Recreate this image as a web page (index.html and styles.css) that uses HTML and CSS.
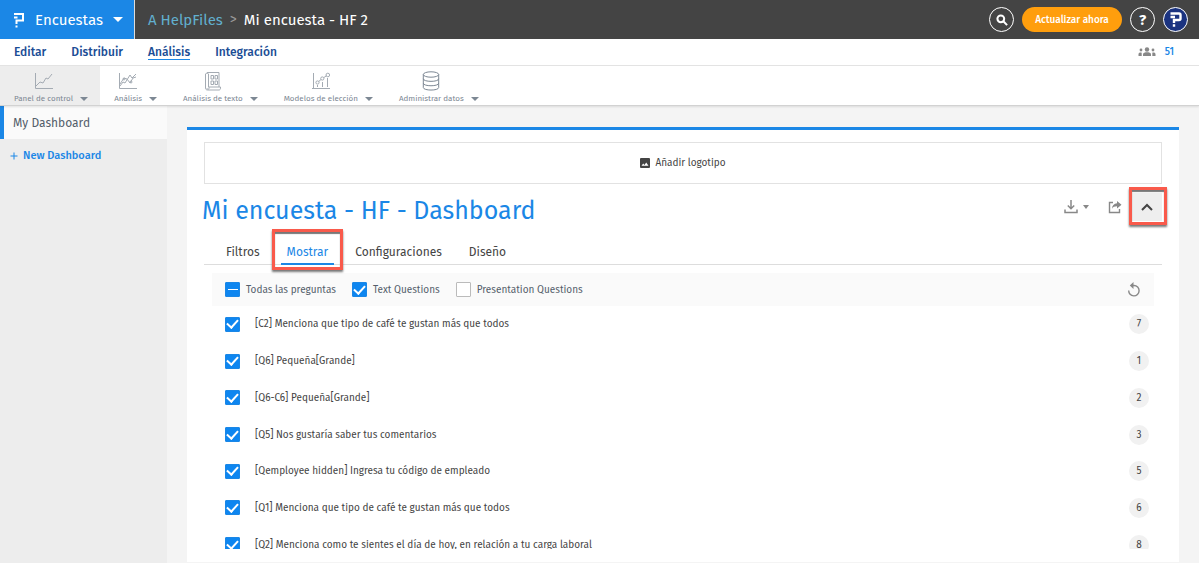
FILE: index.html
```html
<!DOCTYPE html>
<html lang="es">
<head>
    <meta charset="UTF-8">
    <meta name="viewport" content="width=device-width, initial-scale=1.0">
    <title>Mi encuesta - HF - Dashboard</title>
    <link rel="stylesheet" href="styles.css">
</head>
<body>
    <header class="header">
        <button class="product">
            <svg width="12" height="16" viewBox="0 0 12 16" fill="none" stroke="currentColor" stroke-width="2"><path d="M1 2h9v6.500H3.500v3.500M1 5.500h3.500M2.500 14.500h2"/></svg>
            <span>Encuestas</span>
            <i class="caret"></i>
        </button>
        <nav class="breadcrumb">
            <a href="#">A HelpFiles</a>
            <span class="sep">&gt;</span>
            <span>Mi encuesta - HF 2</span>
        </nav>
        <div class="header-actions">
            <button class="round" aria-label="Buscar">
                <svg width="12" height="12" viewBox="0 0 12 12" fill="none" stroke="currentColor" stroke-width="2"><circle cx="4.800" cy="4.800" r="3.400"/><path d="M7.300 7.300l3.800 3.800"/></svg>
            </button>
            <button class="upgrade">Actualizar ahora</button>
            <button class="round help">?</button>
            <button class="round account" aria-label="Cuenta">
                <svg width="14" height="17" viewBox="0 0 14 17" fill="none" stroke="currentColor" stroke-width="2.400"><path d="M1.500 2.500H10a1.500 1.500 0 0 1 1.500 1.500v3.500A1.500 1.500 0 0 1 10 9H5v3M1.500 6H6M3.800 14.500h2.400"/></svg>
            </button>
        </div>
    </header>

    <nav class="menu">
        <a href="#">Editar</a>
        <a href="#">Distribuir</a>
        <a href="#" class="active">Análisis</a>
        <a href="#">Integración</a>
        <a href="#" class="users">
            <svg width="18" height="10" viewBox="0 0 18 10" fill="#888"><circle cx="9" cy="2.500" r="2.200"/><circle cx="3" cy="3" r="1.400"/><circle cx="15" cy="3" r="1.400"/><path d="M5 9V7.400C5 5.800 7 5.300 9 5.300s4 .5 4 2.100V9zM.5 9V7c0-1.200 1-1.700 2.500-1.600.6 0 .7.300.7 1V9zM17.500 9V7c0-1.200-1-1.700-2.500-1.600-.6 0-.7.300-.7 1V9z"/></svg>
            <span>51</span>
        </a>
    </nav>

    <div class="toolbar">
        <button class="tool selected">
            <svg width="20" height="18" viewBox="0 0 20 18"><path d="M1.500 1v15.500H19M2 14l4-4 3 1 3-5 2 1 4-5"/></svg>
            <span>Panel de control</span><i class="caret"></i>
        </button>
        <button class="tool">
            <svg width="20" height="18" viewBox="0 0 20 18"><path d="M1.500 1v15.500H19M2 14l3-4 2 1 5-8 2 3 4-4M2 12l4-6 3 1 3 4 3-5 3-1"/><circle cx="6" cy="7" r="1"/><circle cx="13" cy="10" r="1"/></svg>
            <span>Análisis</span><i class="caret"></i>
        </button>
        <button class="tool">
            <svg width="18" height="20" viewBox="0 0 18 20"><path d="M4.500 16V3A1.700 1.700 0 0 0 1.500 3v14c0 1.300.8 2 2 2H15c1 0 1.500-.8 1.500-2v-1H5v1c0 2-2 2-2 0M3 1.500h12V16M7 4.500h2.500V8H7zM11 4.500h2.500V8H11zM7 10h2.500v3.500H7zM11 10h2.500v3.500H11z"/></svg>
            <span>Análisis de texto</span><i class="caret"></i>
        </button>
        <button class="tool">
            <svg width="20" height="18" viewBox="0 0 20 18"><path d="M2.500 1v15.500M1 16.500h18M6.500 13v2M11.500 10v5M16.500 6v9M7.700 9.500l2.300-2M12.700 5.700l2.800-2"/><circle cx="6.500" cy="10.500" r="1.600"/><circle cx="11.300" cy="6.500" r="1.600"/><circle cx="16.800" cy="3" r="1.800"/></svg>
            <span>Modelos de elección</span><i class="caret"></i>
        </button>
        <button class="tool">
            <svg class="dark" width="18" height="20" viewBox="0 0 18 20"><ellipse cx="9" cy="3.500" rx="7.700" ry="2.700"/><path d="M1.300 3.500v13c0 3.400 15.400 3.400 15.400 0v-13M1.300 7.800c0 3.400 15.400 3.400 15.400 0M1.300 12.200c0 3.400 15.400 3.400 15.400 0"/></svg>
            <span>Administrar datos</span><i class="caret"></i>
        </button>
    </div>

    <div class="content">
        <aside class="sidebar">
            <a href="#" class="current">My Dashboard</a>
            <a href="#" class="new"><svg width="8" height="8" viewBox="0 0 8 8" stroke="currentColor"><path d="M4 0.500v7M0.500 4h7"/></svg>New Dashboard</a>
        </aside>

        <main class="card">
            <button class="logo-box">
                <svg width="10" height="10" viewBox="0 0 10 10"><rect width="10" height="10" rx="1" fill="#444"/><path d="M1.500 7.800l1.700-2.300 1.300 1.500 1.700-2.500 2.300 3.300z" fill="#fff"/></svg>
                Añadir logotipo
            </button>

            <div class="title-row">
                <h1>Mi encuesta - HF - Dashboard</h1>
                <button class="icon-btn download" aria-label="Descargar">
                    <svg width="14" height="14" viewBox="0 0 14 14" fill="none" stroke="currentColor" stroke-width="1.500"><path d="M7 0v8.500M3.800 5.500L7 8.700l3.200-3.200M1 9.500v3h12v-3"/></svg>
                    <i class="caret"></i>
                </button>
                <button class="icon-btn share" aria-label="Compartir">
                    <svg width="14" height="14" viewBox="0 0 14 14"><path d="M5 2.500H1.500v10h10V9" fill="none" stroke="currentColor" stroke-width="1.400"/><path d="M9 1l4.500 3.800L9 8.500V6.300C6.500 6.300 5 7 4 8.800 4 5.500 6 3.400 9 3.200z" fill="currentColor"/></svg>
                </button>
                <button class="icon-btn collapse marked" aria-label="Contraer">
                    <svg width="12" height="8" viewBox="0 0 12 8" fill="none" stroke="currentColor" stroke-width="2"><path d="M1 7l5-5 5 5"/></svg>
                </button>
            </div>

            <nav class="tabs">
                <a href="#">Filtros</a>
                <a href="#" class="active marked">Mostrar</a>
                <a href="#">Configuraciones</a>
                <a href="#">Diseño</a>
            </nav>

            <div class="filter-bar">
                <label><input type="checkbox" class="partial"> Todas las preguntas</label>
                <label><input type="checkbox" checked> Text Questions</label>
                <label><input type="checkbox"> Presentation Questions</label>
                <button class="icon-btn reset" aria-label="Restablecer">
                    <svg width="14" height="15" viewBox="0 0 14 15"><path d="M1.700 8.500A5.200 5.200 0 1 0 7 3.500H5" fill="none" stroke="currentColor" stroke-width="1.400"/><path d="M6.500 0v7L2.800 3.500z" fill="currentColor"/></svg>
                </button>
            </div>

            <div class="question-scroll">
                <ul class="questions">
                    <li><label><input type="checkbox" checked> [C2] Menciona que tipo de café te gustan más que todos</label><span class="count">7</span></li>
                    <li><label><input type="checkbox" checked> [Q6] Pequeña[Grande]</label><span class="count">1</span></li>
                    <li><label><input type="checkbox" checked> [Q6-C6] Pequeña[Grande]</label><span class="count">2</span></li>
                    <li><label><input type="checkbox" checked> [Q5] Nos gustaría saber tus comentarios</label><span class="count">3</span></li>
                    <li><label><input type="checkbox" checked> [Qemployee hidden] Ingresa tu código de empleado</label><span class="count">5</span></li>
                    <li><label><input type="checkbox" checked> [Q1] Menciona que tipo de café te gustan más que todos</label><span class="count">6</span></li>
                    <li><label><input type="checkbox" checked> [Q2] Menciona como te sientes el día de hoy, en relación a tu carga laboral</label><span class="count">8</span></li>
                </ul>
            </div>
        </main>
    </div>
</body>
</html>
```
FILE: styles.css
```css
* {
    box-sizing: border-box;
}
body {
    margin: 0;
    min-height: 100vh;
    display: flex;
    flex-direction: column;
    font-family: "Fira Sans", "Noto Sans", sans-serif;
    font-size: 10px;
    color: #444;
    background: #f4f4f4;
}
a {
    color: inherit;
    text-decoration: none;
}
button {
    font: inherit;
    color: inherit;
    background: none;
    border: none;
    padding: 0;
    cursor: pointer;
}
svg {
    display: block;
    flex: none;
}
.caret {
    border: 3px solid transparent;
    border-top: 4px solid currentColor;
    border-bottom: 0;
}

/* header */
.header {
    display: flex;
    align-items: center;
    height: 39px;
    background: #444;
    color: #fff;
}
.product {
    display: flex;
    align-items: center;
    align-self: stretch;
    width: 135px;
    padding: 0 11px 0 13px;
    border-right: 1px solid #ddd;
    background: #1b87e6;
    font-size: 15px;
}
.product span {
    margin-left: 10px;
}
.product .caret {
    margin-left: auto;
    border-width: 5px 5px 0;
}
.breadcrumb {
    display: flex;
    gap: 7px;
    margin-left: 13px;
    font-size: 15px;
}
.breadcrumb a {
    color: #62b0cf;
}
.breadcrumb .sep {
    color: #999;
    font-size: 14px;
}
.header-actions {
    display: flex;
    align-items: center;
    gap: 8px;
    margin-left: auto;
    padding-right: 11px;
}
.round {
    display: flex;
    align-items: center;
    justify-content: center;
    width: 25px;
    height: 25px;
    border: 1px solid #fff;
    border-radius: 50%;
}
.help {
    font-size: 15px;
    font-weight: bold;
}
.account {
    background: #1b3380;
}
.upgrade {
    width: 100px;
    height: 25px;
    border-radius: 13px;
    background: #ff9e0d;
    font-weight: 500;
}

/* menu */
.menu {
    display: flex;
    align-items: center;
    gap: 25px;
    height: 27px;
    padding: 0 25px 0 14px;
    border-bottom: 1px solid #e4e4e4;
    background: #fff;
    color: #1b4d95;
    font-size: 12px;
    font-weight: 500;
    line-height: 14px;
}
.menu .active {
    box-shadow: 0 1px #1b87e6;
}
.menu .users {
    display: flex;
    align-items: center;
    gap: 9px;
    margin-left: auto;
    color: #1b87e6;
    font-size: 10px;
}

/* toolbar */
.toolbar {
    display: flex;
    height: 40px;
    border-bottom: 1px solid #d2d2d2;
    box-shadow: 0 1px 2px rgba(0, 0, 0, 0.1);
    background: #fff;
    color: #7d8894;
    position: relative;
}
.tool {
    display: grid;
    grid-template-columns: auto auto;
    grid-template-rows: 20px 11px;
    justify-items: center;
    align-items: center;
    align-content: start;
    gap: 2px 7px;
    padding: 5px 12px 0 14px;
    font-size: 8px;
    line-height: 11px;
    white-space: nowrap;
}
.tool svg {
    grid-column: 1;
    fill: none;
    stroke: #a4abb3;
}
.tool svg.dark {
    stroke: #7d8894;
}
.tool span {
    grid-column: 1;
}
.tool .caret {
    border-width: 4px 4px 0;
}
.tool.selected {
    background: #ededed;
}

/* content */
.content {
    display: flex;
    flex: 1;
}
.sidebar {
    width: 167px;
    background: #ededed;
    font-size: 12px;
}
.sidebar a {
    display: flex;
    align-items: center;
    height: 33px;
    padding-left: 10px;
}
.sidebar .current {
    padding-left: 9px;
    border-left: 4px solid #1b87e6;
    background: #fafafa;
    color: #545e6b;
}
.sidebar .new {
    gap: 5px;
    color: #1b87e6;
    font-size: 11px;
    font-weight: 500;
}
.card {
    flex: 1;
    margin: 21px 20px 1px;
    padding: 12px 17px;
    border-top: 3px solid #1b87e6;
    background: #fff;
}
.logo-box {
    display: flex;
    align-items: center;
    justify-content: center;
    gap: 5px;
    width: 100%;
    height: 42px;
    border: 1px solid #e2e2e2;
}
.title-row {
    display: flex;
    align-items: center;
    height: 45px;
}
.title-row h1 {
    margin: 8px auto 0 -2px;
    color: #1b87e6;
    font-size: 25px;
    font-weight: normal;
}
.icon-btn {
    display: flex;
    align-items: center;
    justify-content: center;
    color: #888;
}
.download {
    gap: 5px;
}
.share {
    margin: 0 10px 0 19px;
}
.collapse {
    width: 30px;
    height: 28px;
    background: #eee;
    color: #444;
}
.marked {
    position: relative;
}
.marked::after {
    content: "";
    position: absolute;
    inset: -6px -5px -4px -3px;
    border: 3px solid #f95a4b;
    box-shadow: 0 2px 2px #777, inset 0 2px 1px #777;
}

/* tabs */
.tabs {
    display: flex;
    gap: 15px;
    height: 36px;
    padding-left: 16px;
    border-bottom: 1px solid #ddd;
    font-size: 12px;
}
.tabs a {
    display: flex;
    align-items: center;
    padding: 10px 6px 0;
    margin-bottom: -1px;
}
.tabs .active {
    box-shadow: inset 0 -2px #1b87e6;
    color: #1b87e6;
}
.tabs .marked::after {
    inset: 0 -9px -5px;
}

/* questions */
input[type="checkbox"] {
    appearance: none;
    display: flex;
    align-items: center;
    justify-content: center;
    flex: none;
    width: 15px;
    height: 15px;
    margin: 0;
    border: 1px solid #bbb;
    border-radius: 1px;
    background: #fff;
}
input:checked,
input.partial {
    border-color: #1b87e6;
    background: #0e86f0;
}
input:checked::after {
    content: "";
    width: 5px;
    height: 9px;
    margin-top: -3px;
    border: solid #fff;
    border-width: 0 2px 2px 0;
    transform: rotate(42deg);
}
input.partial::after {
    content: "";
    width: 10px;
    height: 1px;
    background: #fff;
}
.filter-bar {
    display: flex;
    align-items: center;
    gap: 16px;
    height: 33px;
    margin: 8px 8px 0;
    padding: 0 13px;
    background: #fafafa;
    color: #545e6b;
}
.filter-bar label {
    display: flex;
    align-items: center;
    gap: 6px;
}
.reset {
    margin-left: auto;
}
.question-scroll {
    max-height: 243px;
    margin: 0 8px;
    overflow: hidden;
}
.questions {
    display: flex;
    flex-direction: column;
    height: 257px;
    margin: 0;
    padding: 0 5px 0 13px;
    list-style: none;
}
.questions li {
    display: flex;
    flex: 1;
    align-items: center;
    justify-content: space-between;
}
.questions label {
    display: flex;
    align-items: center;
    gap: 15px;
}
.count {
    width: 20px;
    border-radius: 50%;
    background: #f1f1f1;
    line-height: 20px;
    text-align: center;
}
```
